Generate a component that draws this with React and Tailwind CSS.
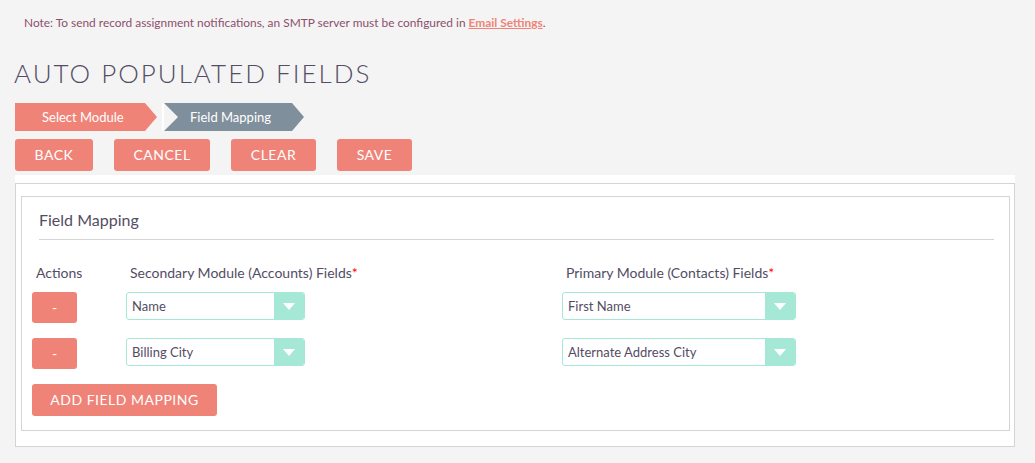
import React from 'react';

const PINK = 'bg-[#f08377]';

const Caret = () => (
  <svg width="12" height="7" viewBox="0 0 12 7">
    <polygon points="0,0 12,0 6,7" fill="#ffffff" />
  </svg>
);

const FakeSelect = ({ value, width }) => (
  <div
    className="flex h-[28px] items-stretch overflow-hidden rounded-[3px] border border-[#a5e8d6] bg-white"
    style={{ width }}
  >
    <div className="flex flex-1 items-center pl-[5px] pt-[2px] text-[13px] text-[#534d64]">{value}</div>
    <div className="flex w-[30px] items-center justify-center bg-[#a5e8d6]">
      <Caret />
    </div>
  </div>
);

const MinusButton = () => (
  <button className={`h-[31px] w-[45px] rounded-[3px] ${PINK} text-[14px] text-white`}>-</button>
);

const rows = [
  { secondary: 'Name', primary: 'First Name' },
  { secondary: 'Billing City', primary: 'Alternate Address City' },
];

export default function App() {
  return (
    <div className="min-h-[463px] w-[1035px] bg-[#f4f4f4] font-['Lato',sans-serif] text-[#534d64]">
      {/* note */}
      <div className="pl-[24px] pt-[16px] text-[11.9px] leading-[13px] text-[#8d4f6c]">
        Note: To send record assignment notifications, an SMTP server must be configured in{' '}
        <a className="font-bold text-[#f08377] underline">Email Settings</a>.
      </div>

      {/* title */}
      <h1 className="mt-[29px] pl-[14px] text-[26px] font-light leading-[30px] tracking-[2px] text-[#534d64]">
        AUTO POPULATED FIELDS
      </h1>

      {/* breadcrumb */}
      <div className="mt-[15px] flex h-[28px] pl-[15px] text-[13px] text-white">
        <div className={`flex w-[142px] items-center pl-[27px] pt-[2px] ${PINK} [clip-path:polygon(0_0,calc(100%-12px)_0,100%_50%,calc(100%-12px)_100%,0_100%)]`}>
          Select Module
        </div>
        <div className="ml-[5px] w-[2px] bg-white" />
        <div className="flex w-[140px] items-center bg-[#808f9c] pl-[26px] pt-[2px] [clip-path:polygon(0_0,calc(100%-12px)_0,100%_50%,calc(100%-12px)_100%,0_100%,14px_50%)]">
          Field Mapping
        </div>
      </div>

      {/* action buttons */}
      <div className="mt-[8px] flex gap-[21px] pl-[15px]">
        {[
          ['BACK', 'w-[78px]'],
          ['CANCEL', 'w-[96px]'],
          ['CLEAR', 'w-[85px]'],
          ['SAVE', 'w-[75px]'],
        ].map(([label, w]) => (
          <button
            key={label}
            className={`h-[32px] ${w} rounded-[3px] ${PINK} pb-[2px] text-[14px] tracking-[0.5px] text-white`}
          >
            {label}
          </button>
        ))}
      </div>

      {/* panel */}
      <div className="ml-[15px] mt-[4px] w-[1000px] bg-white pt-[8px]">
        <div className="border border-[#d4d4d4] pb-[15px] pl-[5px] pr-[4px] pt-[12px]">
          <div className="border border-[#d4d4d4] pb-[14px] pt-[13px]">
            <div className="px-[17px] text-[16px] leading-[19px]">Field Mapping</div>
            <div className="ml-[17px] mr-[15px] mt-[10px] h-px bg-[#d4d4d4]" />

            <div className="mt-[24px] pl-[10px]">
              <div className="grid grid-cols-[94px_436px_1fr] text-[14px] leading-[17px]">
                <div className="pl-[4px]">Actions</div>
                <div className="pl-[4px]">
                  Secondary Module (Accounts) Fields<span className="text-[#ff0000]">*</span>
                </div>
                <div className="pl-[4px]">
                  Primary Module (Contacts) Fields<span className="text-[#ff0000]">*</span>
                </div>
              </div>

              <div className="mt-[11px] flex flex-col gap-[15px]">
                {rows.map((r) => (
                  <div key={r.secondary} className="grid grid-cols-[94px_436px_1fr] items-start">
                    <MinusButton />
                    <FakeSelect value={r.secondary} width={179} />
                    <FakeSelect value={r.primary} width={234} />
                  </div>
                ))}
              </div>

              <button
                className={`mt-[15px] h-[32px] w-[185px] rounded-[3px] ${PINK} pb-[2px] text-[14px] tracking-[0.5px] text-white`}
              >
                ADD FIELD MAPPING
              </button>
            </div>
          </div>
        </div>
      </div>
    </div>
  );
}
